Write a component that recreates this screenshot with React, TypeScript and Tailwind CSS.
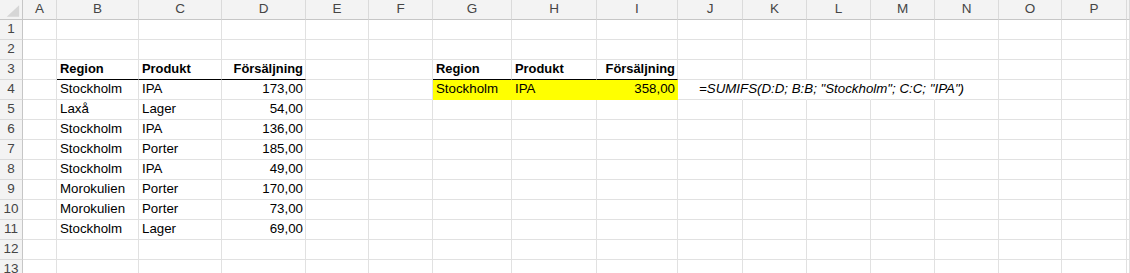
import React from 'react';

type Cell = {
  text: string;
  bold?: boolean;
  italic?: boolean;
  right?: boolean;
  fill?: boolean;
  headLine?: boolean;
  spill?: boolean;
  noRight?: boolean;
};

const columns = ['A', 'B', 'C', 'D', 'E', 'F', 'G', 'H', 'I', 'J', 'K', 'L', 'M', 'N', 'O', 'P', ''];
const rowCount = 13;

const sales: [string, string, string][] = [
  ['Stockholm', 'IPA', '173,00'],
  ['Laxå', 'Lager', '54,00'],
  ['Stockholm', 'IPA', '136,00'],
  ['Stockholm', 'Porter', '185,00'],
  ['Stockholm', 'IPA', '49,00'],
  ['Morokulien', 'Porter', '170,00'],
  ['Morokulien', 'Porter', '73,00'],
  ['Stockholm', 'Lager', '69,00'],
];

// cell map keyed like "B3"
const cells: Record<string, Cell> = {
  B3: { text: 'Region', bold: true, headLine: true },
  C3: { text: 'Produkt', bold: true, headLine: true },
  D3: { text: 'Försäljning', bold: true, right: true, headLine: true },
  G3: { text: 'Region', bold: true, headLine: true },
  H3: { text: 'Produkt', bold: true, headLine: true },
  I3: { text: 'Försäljning', bold: true, right: true, headLine: true },
  G4: { text: 'Stockholm', fill: true },
  H4: { text: 'IPA', fill: true },
  I4: { text: '358,00', right: true, fill: true },
  J4: { text: '=SUMIFS(D:D; B:B; "Stockholm"; C:C; "IPA")', italic: true, spill: true, noRight: true },
  K4: { text: '', noRight: true },
  L4: { text: '', noRight: true },
  M4: { text: '', noRight: true },
};

sales.forEach(([region, product, amount], i) => {
  const r = i + 4;
  cells['B' + r] = { text: region };
  cells['C' + r] = { text: product };
  cells['D' + r] = { text: amount, right: true };
});

const GridCell: React.FC<{ cell?: Cell }> = ({ cell }) => {
  if (!cell) {
    return <div className="border-r border-b border-[#e1e1e1]" />;
  }
  return (
    <div
      className={[
        'relative flex items-end pb-[1px] whitespace-nowrap border-r border-b',
        cell.fill ? 'bg-[#ffff00] border-r-[#ffff00]' : 'border-r-[#e1e1e1]',
        cell.headLine ? 'border-b-black' : cell.fill ? 'border-b-[#ffff00]' : 'border-b-[#e1e1e1]',
        cell.noRight ? 'border-r-white' : '',
        cell.spill ? 'z-10 overflow-visible pl-[21px]' : 'overflow-hidden',
        cell.right ? 'justify-end pr-[2px]' : cell.spill ? '' : 'pl-[3px]',
        cell.bold ? 'font-bold text-[12.9px]' : '',
        cell.italic ? 'italic' : '',
      ].join(' ')}
    >
      <span className="leading-[18px]">{cell.text}</span>
    </div>
  );
};

export default function App() {
  return (
    <div className="w-[1130px] h-[273px] overflow-hidden bg-white text-[13.3px] text-black font-['Liberation_Sans',Arial,sans-serif]">
      <div className="grid grid-cols-[23px_34px_82px_83px_84px_63px_64px_79px_85px_81px_65px_64px_64px_64px_64px_63px_65px_1fr] auto-rows-[20px]">
        {/* corner */}
        <div className="bg-[#f3f3f3] border-r border-b border-[#c6c6c6] flex items-center justify-center">
          <svg width="23" height="20" viewBox="0 0 23 20">
            <polygon points="20,5 20,17 7,17" fill="#d6d6d6" />
          </svg>
        </div>
        {columns.map((c, i) => (
          <div
            key={c + i}
            className="bg-[#f3f3f3] border-b border-b-[#c6c6c6] border-r border-r-[#dadada] flex items-center justify-center text-[13.5px] text-[#454545]"
          >
            {c}
          </div>
        ))}
        {Array.from({ length: rowCount }, (_, ri) => {
          const r = ri + 1;
          return (
            <React.Fragment key={r}>
              <div className="bg-[#f3f3f3] border-r border-r-[#c6c6c6] border-b border-b-[#dadada] flex items-center justify-center text-[13.5px] text-[#454545]">
                {r}
              </div>
              {columns.map((c, ci) => (
                <GridCell key={c + ci} cell={cells[c + r]} />
              ))}
            </React.Fragment>
          );
        })}
      </div>
    </div>
  );
}
